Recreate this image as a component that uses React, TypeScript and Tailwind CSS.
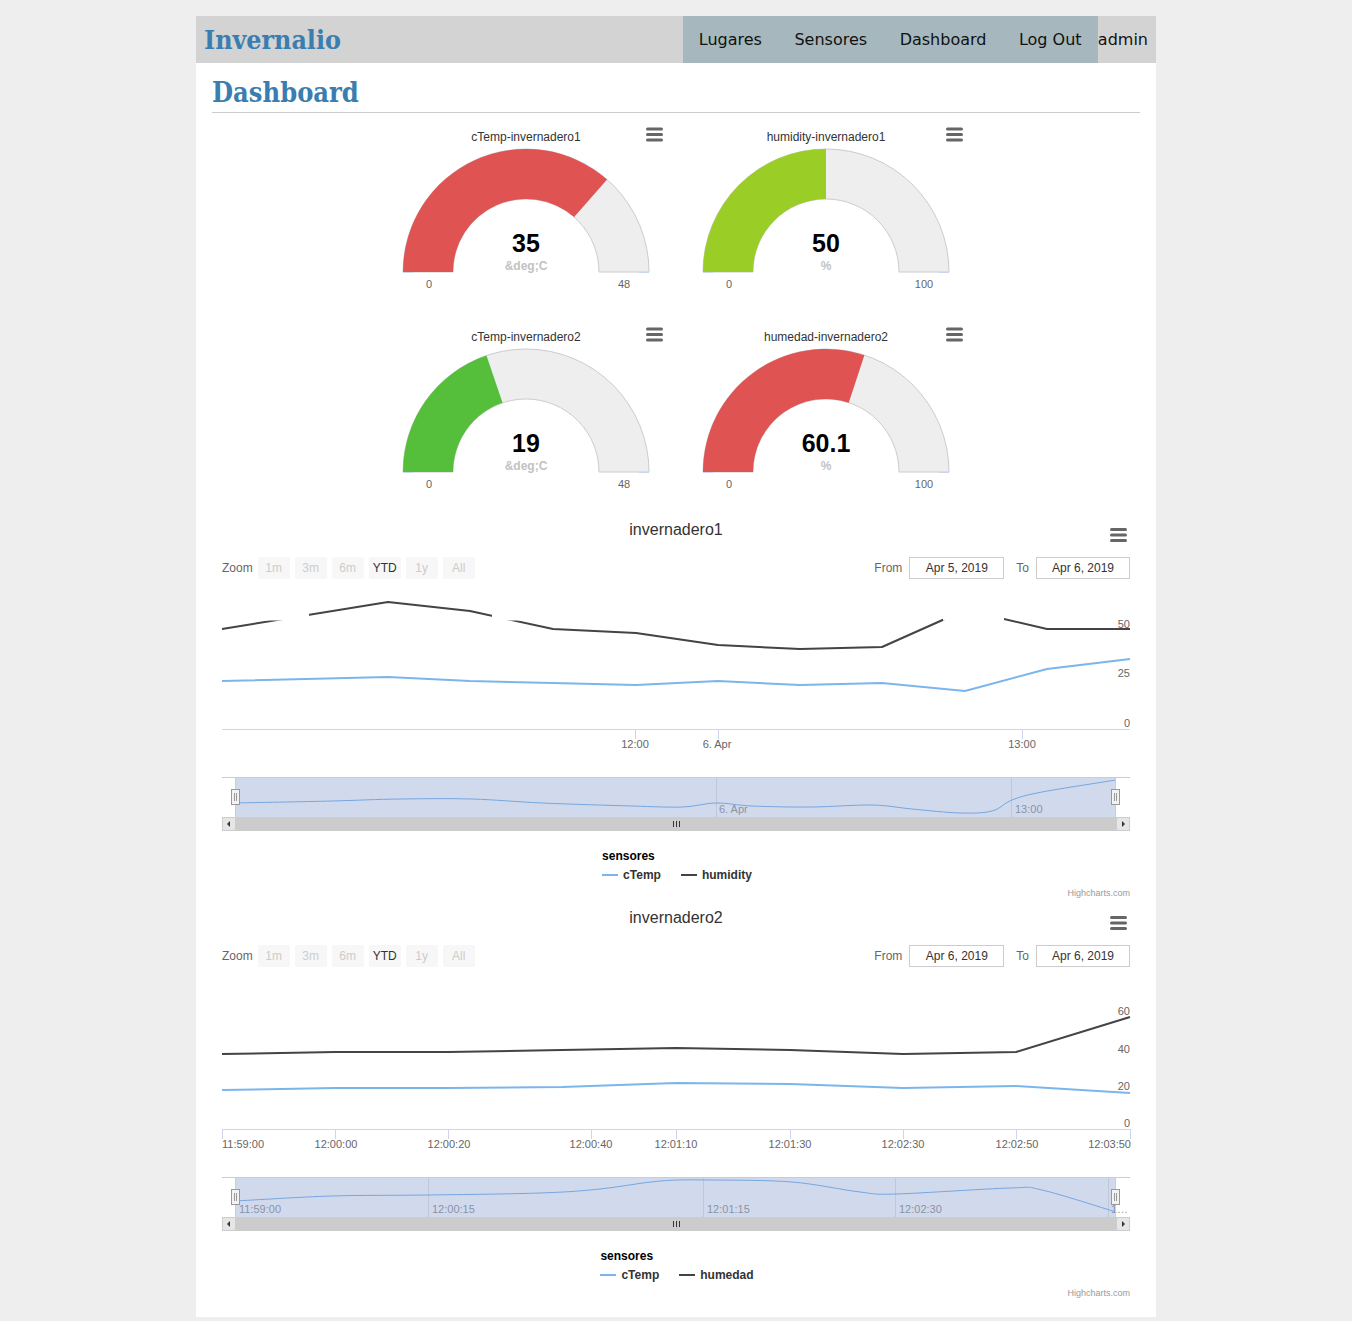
import React from 'react';

type Pt = [number, number];

const poly = (pts: Pt[]) => pts.map((p) => p.join(',')).join(' ');

function smooth(pts: Pt[]) {
  let d = `M${pts[0][0]},${pts[0][1]}`;
  for (let i = 0; i < pts.length - 1; i++) {
    const p0 = pts[i - 1] || pts[i];
    const p1 = pts[i];
    const p2 = pts[i + 1];
    const p3 = pts[i + 2] || p2;
    const c1x = p1[0] + (p2[0] - p0[0]) / 6;
    const c1y = p1[1] + (p2[1] - p0[1]) / 6;
    const c2x = p2[0] - (p3[0] - p1[0]) / 6;
    const c2y = p2[1] - (p3[1] - p1[1]) / 6;
    d += ` C${c1x.toFixed(1)},${c1y.toFixed(1)} ${c2x.toFixed(1)},${c2y.toFixed(1)} ${p2[0]},${p2[1]}`;
  }
  return d;
}

function arcPath(cx: number, cy: number, R: number, r: number, a0: number, a1: number) {
  const rad = (a: number) => (a * Math.PI) / 180;
  const P = (rr: number, a: number) => [cx + rr * Math.cos(rad(a)), cy - rr * Math.sin(rad(a))];
  const [x0, y0] = P(R, a0);
  const [x1, y1] = P(R, a1);
  const [x2, y2] = P(r, a1);
  const [x3, y3] = P(r, a0);
  return `M${x0},${y0} A${R},${R} 0 0 1 ${x1},${y1} L${x2},${y2} A${r},${r} 0 0 0 ${x3},${y3} Z`;
}

function MenuLines({ x, y }: { x: number; y: number }) {
  return (
    <g stroke="#666666" strokeWidth={3} strokeLinecap="round">
      <line x1={x} y1={y} x2={x + 14} y2={y} />
      <line x1={x} y1={y + 5.5} x2={x + 14} y2={y + 5.5} />
      <line x1={x} y1={y + 11} x2={x + 14} y2={y + 11} />
    </g>
  );
}

function Gauge({
  title,
  value,
  max,
  unit,
  color,
}: {
  title: string;
  value: string;
  max: number;
  unit: string;
  color: string;
}) {
  const cx = 150;
  const cy = 159;
  const R = 123;
  const r = 73;
  const f = Math.min(1, parseFloat(value) / max);
  const end = 180 - f * 180;
  return (
    <svg width={300} height={200} className="block font-['Liberation_Sans',Arial,sans-serif]">
      <text x={150} y={28} textAnchor="middle" fontSize={12} fill="#333333">
        {title}
      </text>
      <MenuLines x={271.5} y={16} />
      <path d={arcPath(cx, cy, R, r, 180, 0)} fill="#eeeeee" stroke="#cccccc" strokeWidth={1} />
      <path d={arcPath(cx, cy, R, r, 180, end)} fill={color} />
      <line x1={27} y1={159.5} x2={37} y2={159.5} stroke="#ccd6eb" strokeWidth={1} />
      <line x1={263} y1={159.5} x2={273} y2={159.5} stroke="#ccd6eb" strokeWidth={1} />
      <text x={150} y={139} textAnchor="middle" fontSize={25} fontWeight="bold" fill="#000000">
        {value}
      </text>
      <text x={150} y={157} textAnchor="middle" fontSize={12} fontWeight="bold" fill="#c2c2c2">
        {unit}
      </text>
      <text x={53} y={175} textAnchor="middle" fontSize={11} fill="#666666">
        0
      </text>
      <text x={248} y={175} textAnchor="middle" fontSize={11} fill="#666666">
        {String(max)}
      </text>
    </svg>
  );
}

type Label = { t: string; x: number; anchor?: 'start' | 'middle' | 'end' };
type YLabel = { t: string; y: number };

type ChartProps = {
  title: string;
  from: string;
  to: string;
  black: Pt[];
  blue: Pt[];
  nav: Pt[];
  yLabels: YLabel[];
  xLabels: Label[];
  ticks: number[];
  navGrid: number[];
  navLabels: Label[];
  gaps: [number, number][];
  second: string;
  first: boolean;
};

function StockChart(p: ChartProps) {
  const buttons = ['1m', '3m', '6m', 'YTD', '1y', 'All'];
  return (
    <div className={p.first ? 'mt-[6px]' : 'mt-[9px]'}>
      <div className="relative h-5 text-center font-['Liberation_Sans',Arial,sans-serif] text-[16px] leading-[22px] text-[#333333]">
        {p.title}
        <svg width={20} height={16} className="absolute right-[11px] top-[8px]">
          <MenuLines x={2.5} y={2.5} />
        </svg>
      </div>
      <div className="mt-[18px] flex h-[22px] items-center justify-between px-[10px] font-['Liberation_Sans',Arial,sans-serif] text-[12px]">
        <div className="flex items-center gap-[5px]">
          <span className="text-[#666666]">Zoom</span>
          {buttons.map((b) => (
            <span
              key={b}
              className={
                b === 'YTD'
                  ? 'flex h-[22px] w-8 items-center justify-center rounded-[2px] bg-[#f7f7f7] text-[#333333]'
                  : 'flex h-[22px] w-8 items-center justify-center rounded-[2px] bg-[#f7f7f7] text-[#cccccc]'
              }
            >
              {b}
            </span>
          ))}
        </div>
        <div className="flex items-center">
          <span className="text-[#666666]">From</span>
          <span className="ml-[7px] flex h-[22px] w-[95px] items-center justify-center border border-[#cccccc] text-[#333333]">
            {p.from}
          </span>
          <span className="ml-3 text-[#666666]">To</span>
          <span className="ml-[7px] flex h-[22px] w-[94px] items-center justify-center border border-[#cccccc] text-[#333333]">
            {p.to}
          </span>
        </div>
      </div>
      <svg
        width={928}
        height={250}
        className={
          p.first
            ? "mt-[6px] block font-['Liberation_Sans',Arial,sans-serif]"
            : "mt-[18px] block font-['Liberation_Sans',Arial,sans-serif]"
        }
      >
        <polyline points={poly(p.blue)} fill="none" stroke="#7cb5ec" strokeWidth={2} strokeLinejoin="round" />
        <polyline points={poly(p.black)} fill="none" stroke="#434348" strokeWidth={2} strokeLinejoin="round" />
        {p.gaps.map(([a, b], i) => (
          <rect key={i} x={a} y={0} width={b - a} height={35.5} fill="#ffffff" />
        ))}
        {p.yLabels.map((l) => (
          <text key={l.t} x={918} y={l.y} textAnchor="end" fontSize={11} fill="#666666">
            {l.t}
          </text>
        ))}
        <line x1={10} y1={144.5} x2={918} y2={144.5} stroke="#ccd6eb" />
        {p.ticks.map((t) => (
          <line key={t} x1={t + 0.5} y1={144} x2={t + 0.5} y2={154} stroke="#ccd6eb" />
        ))}
        {p.xLabels.map((l) => (
          <text key={l.t} x={l.x} y={163} textAnchor={l.anchor || 'middle'} fontSize={11} fill="#666666">
            {l.t}
          </text>
        ))}
        {/* navigator */}
        <line x1={10} y1={192.5} x2={918} y2={192.5} stroke="#cccccc" />
        {p.navGrid.map((g) => (
          <line key={g} x1={g + 0.5} y1={193} x2={g + 0.5} y2={232} stroke="#e6e6e6" />
        ))}
        {p.navLabels.map((l) => (
          <text key={l.t} x={l.x} y={228} fontSize={11} fill="#999999">
            {l.t}
          </text>
        ))}
        <path d={smooth(p.nav)} fill="none" stroke="#7cb5ec" strokeWidth={1} />
        <rect x={23} y={193} width={881} height={39} fill="rgba(102,133,194,0.3)" />
        <line x1={23.5} y1={193} x2={23.5} y2={232} stroke="#cccccc" />
        <line x1={903.5} y1={193} x2={903.5} y2={232} stroke="#cccccc" />
        {[19.5, 899.5].map((hx) => (
          <g key={hx}>
            <rect x={hx} y={204.5} width={8} height={15} fill="#f2f2f2" stroke="#999999" />
            <line x1={hx + 3} y1={208} x2={hx + 3} y2={216} stroke="#999999" />
            <line x1={hx + 5} y1={208} x2={hx + 5} y2={216} stroke="#999999" />
          </g>
        ))}
        {/* scrollbar */}
        <rect x={10} y={232} width={908} height={14} fill="#cccccc" />
        <rect x={10.5} y={232.5} width={13} height={13} fill="#e6e6e6" stroke="#cccccc" />
        <rect x={904.5} y={232.5} width={13} height={13} fill="#e6e6e6" stroke="#cccccc" />
        <path d="M18,236 L15,239 L18,242 Z" fill="#333333" />
        <path d="M910,236 L913,239 L910,242 Z" fill="#333333" />
        <g stroke="#333333" strokeWidth={1}>
          <line x1={461.5} y1={236} x2={461.5} y2={242} />
          <line x1={464.5} y1={236} x2={464.5} y2={242} />
          <line x1={467.5} y1={236} x2={467.5} y2={242} />
        </g>
      </svg>
      <div className="mt-[13px] flex justify-center font-['Liberation_Sans',Arial,sans-serif] text-[12px] font-bold leading-4 text-[#333333]">
        <div className="flex flex-col pl-[2px]">
          <div className="text-black">sensores</div>
          <div className="mt-[3px] flex items-center">
            <span className="h-[2px] w-4 bg-[#7cb5ec]" />
            <span className="ml-[5px]">cTemp</span>
            <span className="ml-5 h-[2px] w-4 bg-[#434348]" />
            <span className="ml-[5px]">{p.second}</span>
          </div>
        </div>
      </div>
      <div className="mt-[5px] pr-[10px] text-right font-['Liberation_Sans',Arial,sans-serif] text-[9px] leading-[10px] text-[#999999]">
        Highcharts.com
      </div>
    </div>
  );
}

export default function App() {
  const chart1: ChartProps = {
    title: 'invernadero1',
    from: 'Apr 5, 2019',
    to: 'Apr 6, 2019',
    black: [
      [10, 44], [176, 17], [258, 26], [341, 44], [424, 48], [506, 60], [588, 64], [670, 62], [753, 25], [835, 44], [918, 44],
    ],
    blue: [
      [10, 96], [176, 92], [258, 96], [341, 98], [424, 100], [506, 96], [588, 100], [670, 98], [753, 106], [835, 84], [918, 74],
    ],
    nav: [
      [23, 218], [120, 216], [188, 214], [260, 214], [330, 218], [420, 221], [470, 222], [504, 218], [540, 221], [600, 222],
      [660, 220], [700, 224], [748, 228], [780, 226], [800, 215], [830, 207], [904, 195],
    ],
    yLabels: [
      { t: '50', y: 43 },
      { t: '25', y: 92 },
      { t: '0', y: 142 },
    ],
    xLabels: [
      { t: '12:00', x: 423 },
      { t: '6. Apr', x: 505 },
      { t: '13:00', x: 810 },
    ],
    ticks: [423, 506, 810],
    navGrid: [504, 799],
    navLabels: [
      { t: '6. Apr', x: 507 },
      { t: '13:00', x: 803 },
    ],
    gaps: [
      [52, 97],
      [280, 310],
      [731, 792],
    ],
    second: 'humidity',
    first: true,
  };
  const chart2: ChartProps = {
    title: 'invernadero2',
    from: 'Apr 6, 2019',
    to: 'Apr 6, 2019',
    black: [
      [10, 69], [123, 67], [236, 67], [350, 65], [464, 63], [578, 65], [691, 69], [804, 67], [918, 32],
    ],
    blue: [
      [10, 105], [123, 103], [236, 103], [350, 102], [464, 98], [578, 99], [691, 103], [804, 101], [918, 108],
    ],
    nav: [
      [23, 216], [120, 211], [216, 210], [328, 208], [388, 204], [448, 196], [500, 195], [580, 197], [648, 207], [684, 209],
      [798, 203], [830, 205], [904, 227],
    ],
    yLabels: [
      { t: '60', y: 30 },
      { t: '40', y: 68 },
      { t: '20', y: 105 },
      { t: '0', y: 142 },
    ],
    xLabels: [
      { t: '11:59:00', x: 10, anchor: 'start' },
      { t: '12:00:00', x: 124 },
      { t: '12:00:20', x: 237 },
      { t: '12:00:40', x: 379 },
      { t: '12:01:10', x: 464 },
      { t: '12:01:30', x: 578 },
      { t: '12:02:30', x: 691 },
      { t: '12:02:50', x: 805 },
      { t: '12:03:50', x: 919, anchor: 'end' },
    ],
    ticks: [10, 123, 236, 379, 464, 578, 691, 804, 918],
    navGrid: [216, 491, 683, 896],
    navLabels: [
      { t: '11:59:00', x: 27 },
      { t: '12:00:15', x: 220 },
      { t: '12:01:15', x: 495 },
      { t: '12:02:30', x: 687 },
      { t: '1…', x: 899 },
    ],
    gaps: [],
    second: 'humedad',
    first: false,
  };

  return (
    <div className="min-h-[1321px] bg-[#eeeeee] pt-4">
      <div className="mx-auto w-[960px] bg-white pb-[19px]">
        <div className="flex h-[47px] items-center bg-[#d3d3d3]">
          <div className="pl-[8px] font-['DejaVu_Serif_Condensed','DejaVu_Serif',serif] text-[26.5px] font-bold text-[#3a7db0]">
            Invernalio
          </div>
          <div className="ml-auto flex h-full items-center bg-[#a6b8bd] font-['DejaVu_Sans',sans-serif] text-[16px] text-[#111111]">
            <span className="px-[16.25px]">Lugares</span>
            <span className="px-[16.25px]">Sensores</span>
            <span className="px-[16.25px]">Dashboard</span>
            <span className="px-[16.25px]">Log Out</span>
          </div>
          <span className="pr-2 font-['DejaVu_Sans',sans-serif] text-[16px] text-[#111111]">admin</span>
        </div>
        <div className="px-4">
          <h1 className="border-b border-[#cccccc] pb-[3px] pt-[14px] font-['DejaVu_Serif_Condensed','DejaVu_Serif',serif] text-[27px] font-bold leading-8 text-[#3a7db0]">
            Dashboard
          </h1>
          <div className="mx-auto grid w-[600px] grid-cols-2">
            <Gauge title="cTemp-invernadero1" value="35" max={48} unit={'&deg;C'} color="#df5353" />
            <Gauge title="humidity-invernadero1" value="50" max={100} unit="%" color="#9acd26" />
            <Gauge title="cTemp-invernadero2" value="19" max={48} unit={'&deg;C'} color="#55bf3b" />
            <Gauge title="humedad-invernadero2" value="60.1" max={100} unit="%" color="#df5353" />
          </div>
          <StockChart {...chart1} />
          <StockChart {...chart2} />
        </div>
      </div>
    </div>
  );
}
